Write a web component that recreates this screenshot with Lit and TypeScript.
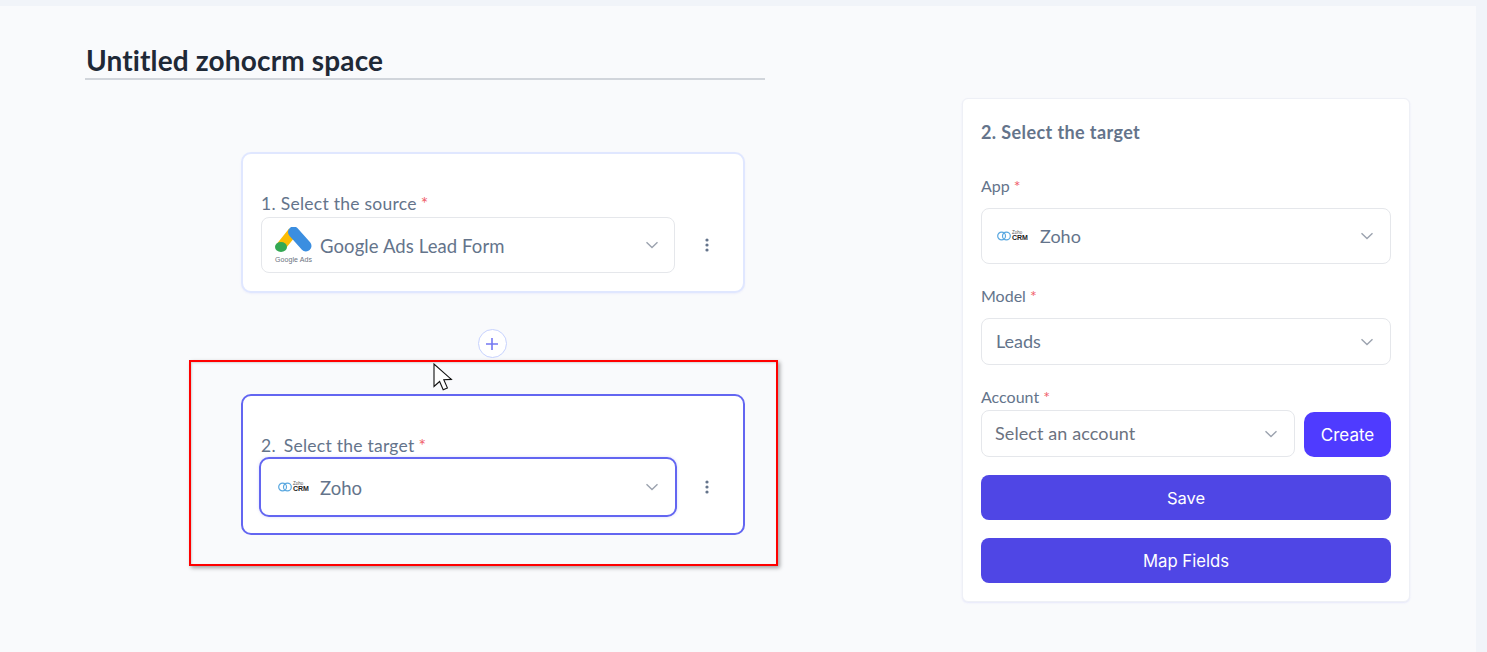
import { LitElement, html, css, svg } from "lit";
import { customElement } from "lit/decorators.js";

const chevron = html`<svg class="chev" width="14" height="8" viewBox="0 0 14 8"><path d="M1.5 1.2 7 6.6l5.5-5.4" fill="none" stroke="#9ca3af" stroke-width="1.4"/></svg>`;

const kebab = html`<svg class="kebab" width="4" height="14" viewBox="0 0 4 14"><g fill="#64748b"><circle cx="2" cy="2" r="1.6"/><circle cx="2" cy="7" r="1.6"/><circle cx="2" cy="12" r="1.6"/></g></svg>`;

const zohoLogo = html`<span class="zoho">
  <svg width="14" height="10" viewBox="0 0 14 10"><g fill="none" stroke="#5aa8e0" stroke-width="1.2"><circle cx="4.6" cy="5" r="3.9"/><circle cx="9.4" cy="5" r="3.9"/></g></svg>
  <span class="zoho-text"><span class="z1">Zoho</span><span class="z2">CRM</span></span>
</span>`;

const gadsLogo = html`<span class="gads">
  <svg width="37" height="28" viewBox="0 1.5 37 28">
    <path d="M18 6 6 21" stroke="#fbbc04" stroke-width="10" fill="none"/>
    <path d="M18.5 6.5 31 20.5" stroke="#3b8ee0" stroke-width="11" stroke-linecap="round" fill="none"/>
    <ellipse cx="6" cy="21.5" rx="6" ry="5" fill="#34a853"/>
  </svg>
  <span class="gads-text">Google Ads</span>
</span>`;

const cursor = svg`<path d="M1 1v22.5l5.6-5 3.6 8.3 4.2-1.9-3.6-8.1 7.6-.4z" fill="#fff" stroke="#111" stroke-width="1.1" stroke-linejoin="miter"/>`;

@customElement("app-root")
export class AppRoot extends LitElement {
  static styles = css`
    :host { display: block; position: relative; height: 652px; overflow: hidden; background: #f1f4f9; font-family: "Lato", "Inter", sans-serif; color: #64748b; }
    * { box-sizing: border-box; }
    .main { width: 1476px; height: 646px; position: relative; top: 6px; background: #f9fafc; display: flex; }
    .left { width: 962px; padding-left: 85px; flex: none; }
    .title { width: 680px; height: 38px; margin-top: 36px; border-bottom: 2px solid #d1d5db; font-size: 28px; line-height: 36px; font-weight: 700; color: #1f2937; letter-spacing: 0.15px; padding-left: 1px; white-space: nowrap; }
    .canvas { padding-left: 156px; width: 660px; }
    .card { width: 504px; height: 141px; background: #fff; border: 2px solid #e0e7ff; border-radius: 10px; padding: 39px 18px 0 18px; box-shadow: 0 1px 2px rgba(99,102,241,.08); }
    .card.first { margin-top: 72px; }
    .card.active { border-color: #6366f1; box-shadow: none; }
    .card .label { font-size: 17.5px; line-height: 22px; height: 22px; color: #64748b; letter-spacing: 0.25px; white-space: nowrap; display: flex; }
    .num { margin-right: 8px; }
    .first .num { margin-right: 5px; }
    .req { color: #f0606a; margin-left: 4px; }
    .row { display: flex; align-items: center; }
    .sel { display: flex; align-items: center; background: #fff; border: 1px solid #e5e7eb; border-radius: 8px; font-size: 18.5px; color: #64748b; white-space: nowrap; }
    .sel .txt { flex: 1; }
    .chev { flex: none; margin-right: 15px; }
    .source-sel { width: 414px; height: 56px; margin-top: 2px; padding-left: 13px; letter-spacing: 0.1px; }
    .source-sel .txt { margin-left: 8px; padding-top: 2px; }
    .source-sel .chev { margin-right: 15px; }
    .target-sel { width: 418px; height: 60px; margin-left: -2px; margin-top: 0; border: 2px solid #6366f1; border-radius: 10px; padding-left: 17px; box-shadow: 0 0 3px rgba(99,102,241,.25); }
    .target-sel .txt { margin-left: 10px; padding-top: 2px; }
    .target-sel .chev { margin-right: 16px; }
    .kebab { flex: none; margin-left: 30px; }
    .first .kebab { margin-top: 2px; }
    .target-row .kebab { margin-left: 28px; }
    .plus-wrap { height: 101px; display: flex; justify-content: center; align-items: flex-start; padding-top: 36px; width: 502px; }
    .plus { width: 29px; height: 29px; border-radius: 50%; border: 1.5px solid #c7d2fe; background: #fff; display: flex; align-items: center; justify-content: center; }
    .zoho { display: inline-flex; align-items: center; gap: 1px; flex: none; width: 32px; }
    .zoho-text { display: flex; flex-direction: column; align-items: flex-start; line-height: 1; }
    .z1 { font-size: 4.5px; line-height: 4.5px; color: #555; font-family: "Liberation Sans", sans-serif; }
    .z2 { font-size: 7px; line-height: 6.5px; font-weight: 700; color: #222; font-family: "Liberation Sans", sans-serif; }
    .gads { display: inline-flex; flex-direction: column; align-items: center; flex: none; width: 37px; }
    .gads-text { font-size: 7px; line-height: 7px; color: #6b7280; font-family: "Liberation Sans", sans-serif; white-space: nowrap; margin-top: 1px; }
    .panel { flex: none; width: 448px; height: 504px; margin-top: 92px; background: #fff; border: 1px solid #eef0f6; border-radius: 6px; box-shadow: 0 1px 2px rgba(99,102,241,.12); padding: 0 18px; }
    .panel h2 { margin: 0; font-size: 18px; line-height: 22px; font-weight: 700; color: #64748b; letter-spacing: 0.4px; padding-top: 22px; box-sizing: content-box; height: 22px; }
    .panel .flabel { font-size: 16px; line-height: 20px; color: #64748b; display: block; }
    .app-label { margin-top: 33px; }
    .panel .sel { font-size: 18px; }
    .panel .chev { margin-right: 16px; }
    .app-sel { height: 56px; margin-top: 12px; padding-left: 15px; }
    .app-sel .txt { margin-left: 11px; }
    .model-label { margin-top: 22px; }
    .panel .model-sel { height: 47px; margin-top: 12px; padding-left: 14px; font-size: 18px; }
    .model-sel .txt, .account-sel .txt { padding-bottom: 2px; }
    .account-label { margin-top: 22px; }
    .account-row { display: flex; align-items: flex-end; gap: 9px; height: 47px; margin-top: 3px; }
    .panel .account-sel { width: 314px; height: 47px; padding-left: 13px; font-size: 18px; letter-spacing: 0.1px; color: #6b7280; flex: none; }
    .btn { display: flex; align-items: center; justify-content: center; color: #fff; font-family: "Inter", sans-serif; font-size: 17px; border-radius: 8px; height: 45px; background: #4f46e5; }
    .create { flex: 1; background: #4f3bff; border-radius: 10px; }
    .save { margin-top: 18px; font-size: 16.5px; }
    .map { margin-top: 18px; font-size: 16.7px; }
    .annot { position: absolute; left: 189px; top: 360px; width: 589px; height: 206px; border: 2px solid #f00; box-shadow: 2px 2px 4px rgba(0,0,0,.35), inset 1px 1px 2px rgba(0,0,0,.15); pointer-events: none; }
    .cursor { position: absolute; left: 433px; top: 363px; }
  `;

  render() {
    return html`
      <div class="main">
        <section class="left">
          <div class="title">Untitled zohocrm space</div>
          <div class="canvas">
            <div class="card first">
              <div class="label"><span class="num">1.</span>Select the source<span class="req">*</span></div>
              <div class="row">
                <div class="sel source-sel">${gadsLogo}<span class="txt">Google Ads Lead Form</span>${chevron}</div>
                ${kebab}
              </div>
            </div>
            <div class="plus-wrap">
              <div class="plus"><svg width="14" height="14" viewBox="0 0 14 14"><path d="M7 1v12M1 7h12" stroke="#7478f2" stroke-width="1.6" fill="none"/></svg></div>
            </div>
            <div class="card active">
              <div class="label"><span class="num">2.</span>Select the target<span class="req">*</span></div>
              <div class="row target-row">
                <div class="sel target-sel">${zohoLogo}<span class="txt">Zoho</span>${chevron}</div>
                ${kebab}
              </div>
            </div>
          </div>
        </section>
        <aside class="panel">
          <h2>2. Select the target</h2>
          <span class="flabel app-label">App<span class="req">*</span></span>
          <div class="sel app-sel">${zohoLogo}<span class="txt">Zoho</span>${chevron}</div>
          <span class="flabel model-label">Model<span class="req">*</span></span>
          <div class="sel model-sel"><span class="txt">Leads</span>${chevron}</div>
          <span class="flabel account-label">Account<span class="req">*</span></span>
          <div class="account-row">
            <div class="sel account-sel"><span class="txt">Select an account</span>${chevron}</div>
            <div class="btn create">Create</div>
          </div>
          <div class="btn save">Save</div>
          <div class="btn map">Map Fields</div>
        </aside>
      </div>
      <div class="annot"></div>
      <svg class="cursor" width="20" height="28" viewBox="0 0 20 28">${cursor}</svg>
    `;
  }
}
